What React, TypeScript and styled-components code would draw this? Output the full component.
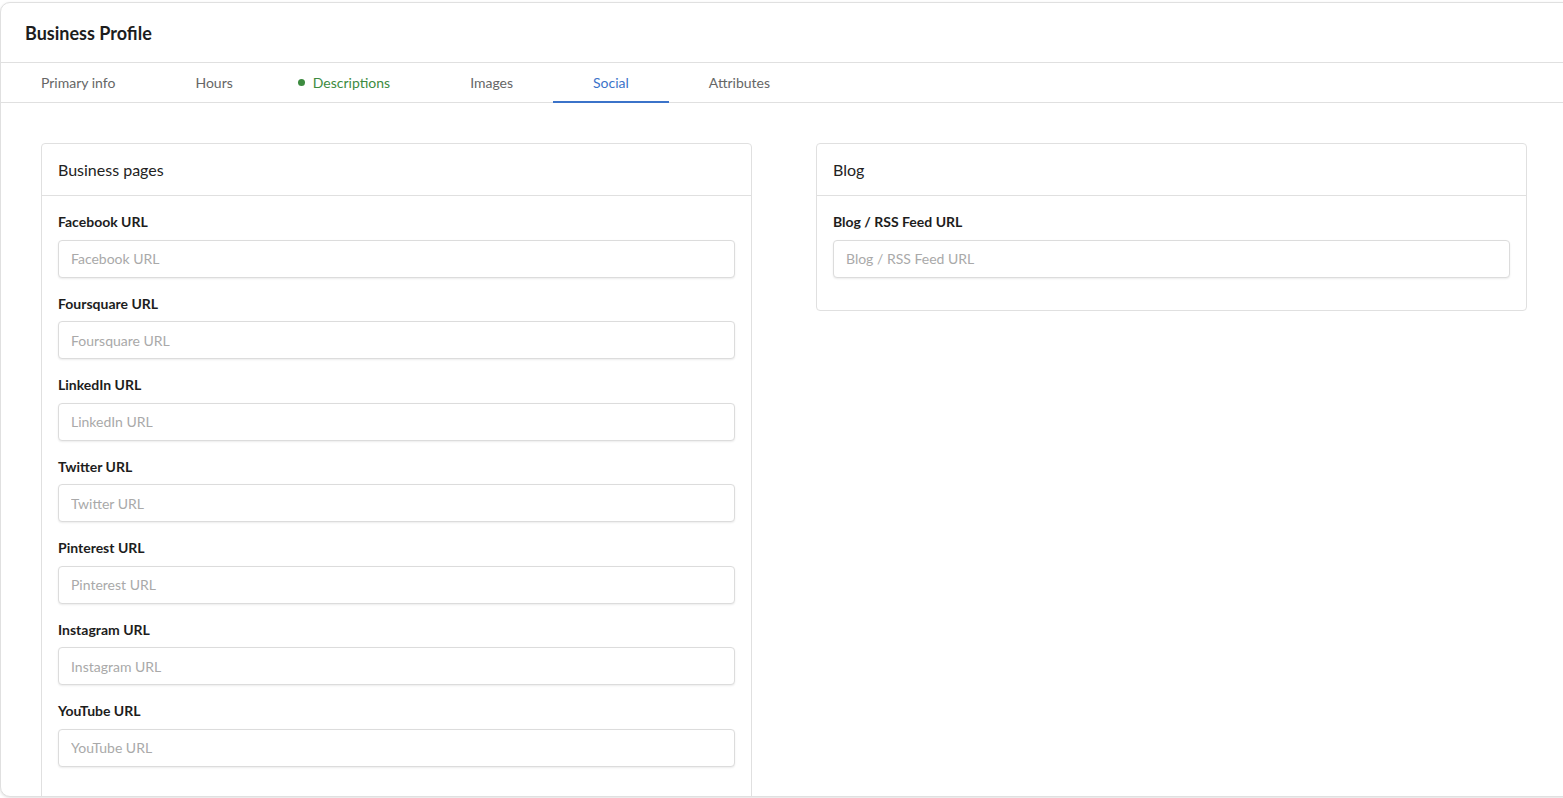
import React from 'react';
import styled, {createGlobalStyle} from 'styled-components';

const GlobalStyle = createGlobalStyle`
  html, body {
    margin: 0;
    padding: 0;
    background: #fff;
    overflow: hidden;
  }
  body {
    font-family: Lato, 'Open Sans', sans-serif;
    color: #222;
  }
`;

const TABS = [
  {name: 'Primary info'},
  {name: 'Hours'},
  {name: 'Descriptions', done: true},
  {name: 'Images'},
  {name: 'Social', active: true},
  {name: 'Attributes'},
];

const BUSINESS_PAGES = [
  'Facebook URL',
  'Foursquare URL',
  'LinkedIn URL',
  'Twitter URL',
  'Pinterest URL',
  'Instagram URL',
  'YouTube URL',
];

const Page = styled.div`
  padding-top: 2px;
  height: 798px;
  box-sizing: border-box;
`;

const Panel = styled.section`
  width: 1567px;
  height: 795px;
  box-sizing: border-box;
  border: 1px solid #e0e0e0;
  border-radius: 10px 0 0 10px;
  box-shadow: 0 1px 3px rgba(0, 0, 0, 0.12);
  overflow: hidden;
  background: #fff;
`;

const PanelHeader = styled.header`
  height: 59px;
  display: flex;
  align-items: center;
  padding-left: 24px;
  border-bottom: 1px solid #e0e0e0;
`;

const Title = styled.h1`
  margin: 0;
  font-size: 18px;
  font-weight: 700;
  color: #1d1d1d;
`;

const TabBar = styled.nav`
  display: flex;
  height: 39px;
  border-bottom: 1px solid #e0e0e0;
`;

const Tab = styled.div<{$active?: boolean; $done?: boolean}>`
  position: relative;
  display: flex;
  align-items: center;
  padding: 0 40px;
  font-size: 14px;
  color: ${(p) => (p.$active ? '#3b73c9' : p.$done ? '#3d8b40' : '#666')};
  border-bottom: 2px solid ${(p) => (p.$active ? '#3b73c9' : 'transparent')};
  margin-bottom: -1px;
`;

const Dot = styled.span`
  position: absolute;
  left: 25px;
  top: 50%;
  margin-top: -3px;
  width: 7px;
  height: 7px;
  border-radius: 50%;
  background: #3d8b40;
`;

const Content = styled.div`
  display: grid;
  grid-template-columns: 711px 711px;
  column-gap: 64px;
  align-items: start;
  padding: 40px;
`;

const Card = styled.div`
  border: 1px solid #e0e0e0;
  border-radius: 4px;
  background: #fff;
`;

const CardHeader = styled.div`
  height: 51px;
  display: flex;
  align-items: center;
  padding-left: 16px;
  border-bottom: 1px solid #e0e0e0;
  font-size: 16px;
  color: #222;
`;

const CardBody = styled.div`
  padding: 16px 16px 0;
`;

const Field = styled.div`
  display: flex;
  flex-direction: column;
  margin-bottom: 16px;
  &:last-child {
    margin-bottom: 32px;
  }
`;

const Label = styled.label`
  font-size: 14px;
  font-weight: 700;
  line-height: 19.5px;
  margin-bottom: 8px;
  color: #1d1d1d;
`;

const Input = styled.input`
  height: 38px;
  box-sizing: border-box;
  border: 1px solid #dcdcdc;
  border-radius: 4px;
  box-shadow: 0 1px 2px rgba(0, 0, 0, 0.08);
  padding: 0 12px;
  font-family: inherit;
  font-size: 14px;
  color: #333;
  outline: none;
  &::placeholder {
    color: #a9a9a9;
  }
`;

const FieldGroup: React.FC<{name: string}> = ({name}) => (
  <Field>
    <Label>{name}</Label>
    <Input placeholder={name} />
  </Field>
);

const App: React.FC = () => {
  return (
    <>
      <GlobalStyle />
      <Page>
        <Panel>
          <PanelHeader>
            <Title>Business Profile</Title>
          </PanelHeader>
          <TabBar>
            {TABS.map((t) => (
              <Tab key={t.name} $active={t.active} $done={t.done}>
                {t.done && <Dot />}
                {t.name}
              </Tab>
            ))}
          </TabBar>
          <Content>
            <Card>
              <CardHeader>Business pages</CardHeader>
              <CardBody>
                {BUSINESS_PAGES.map((name) => (
                  <FieldGroup key={name} name={name} />
                ))}
              </CardBody>
            </Card>
            <Card>
              <CardHeader>Blog</CardHeader>
              <CardBody>
                <FieldGroup name="Blog / RSS Feed URL" />
              </CardBody>
            </Card>
          </Content>
        </Panel>
      </Page>
    </>
  );
};

export default App;
